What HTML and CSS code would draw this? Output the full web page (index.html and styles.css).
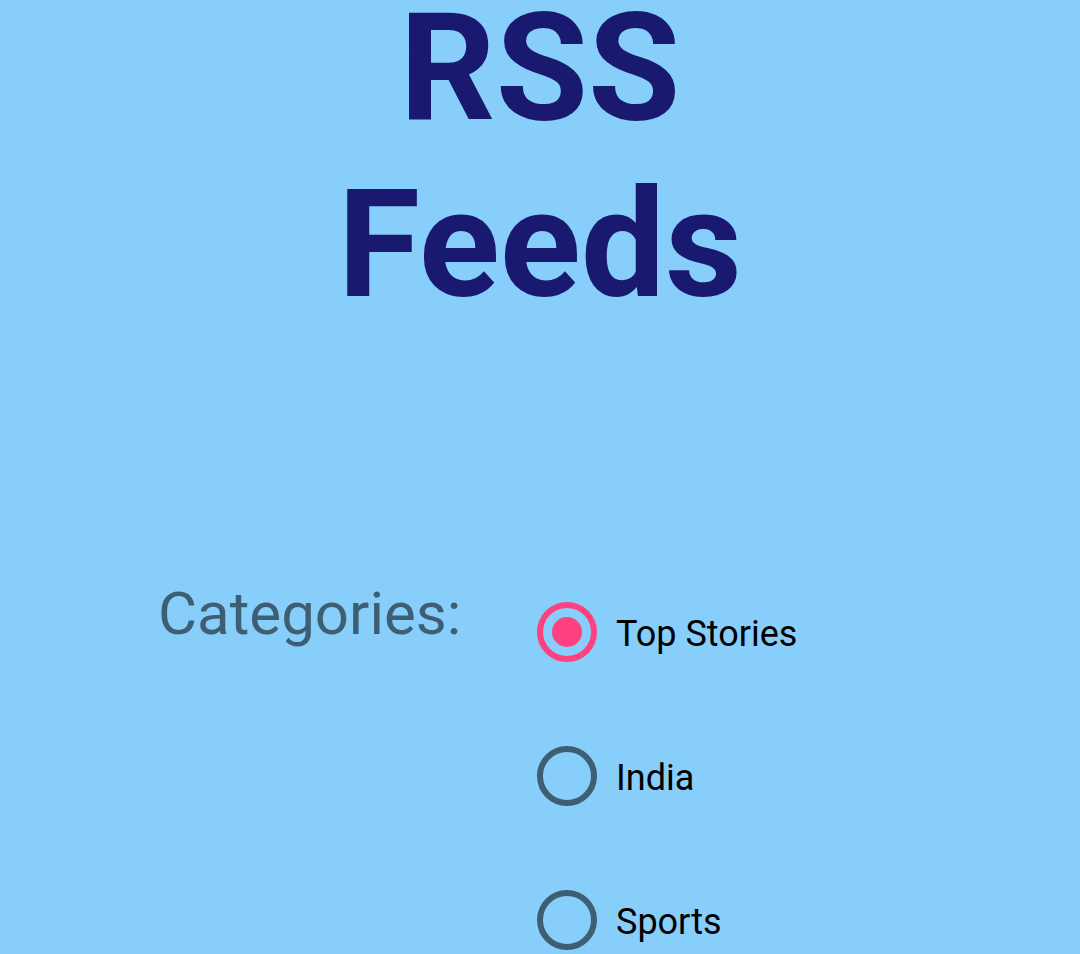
FILE: index.html
```html
<!DOCTYPE html>
<html lang="en">
<head>
<meta charset="utf-8">
<title>RSS Feeds</title>
<link rel="stylesheet" href="styles.css">
</head>
<body>
  <h1 class="title">RSS<br>Feeds</h1>
  <div class="categories">
    <div class="categories-label">Categories:</div>
    <div class="radio-group">
      <label class="radio-item">
        <span class="radio-circle checked"><span class="radio-dot"></span></span>
        <span class="radio-text">Top Stories</span>
      </label>
      <label class="radio-item">
        <span class="radio-circle"></span>
        <span class="radio-text">India</span>
      </label>
      <label class="radio-item">
        <span class="radio-circle"></span>
        <span class="radio-text">Sports</span>
      </label>
    </div>
  </div>
</body>
</html>
```

FILE: styles.css
```css
html {
  background: #87cefa;
}

body {
  margin: 0;
  background: #87cefa;
  font-family: Roboto, "Liberation Sans", sans-serif;
  overflow: hidden;
}

.title {
  margin: -18px 0 0;
  font-size: 150px;
  font-weight: 700;
  line-height: 1.172;
  text-align: center;
  color: #191970;
}

.categories {
  display: flex;
  align-items: flex-start;
  margin-top: 226px;
  padding-left: 158px;
}

.categories-label {
  flex: 0 0 379px;
  padding-top: 19px;
  font-size: 60px;
  line-height: 1.172;
  color: rgba(0, 0, 0, 0.54);
}

.radio-group {
  display: flex;
  flex-direction: column;
}

.radio-item {
  display: flex;
  align-items: center;
  gap: 19px;
  height: 144px;
}

.radio-circle {
  box-sizing: border-box;
  width: 60px;
  height: 60px;
  border: 6px solid rgba(0, 0, 0, 0.54);
  border-radius: 50%;
  display: flex;
  align-items: center;
  justify-content: center;
  flex: 0 0 60px;
}

.radio-circle.checked {
  border-color: #ff4081;
}

.radio-dot {
  width: 30px;
  height: 30px;
  border-radius: 50%;
  background: #ff4081;
}

.radio-text {
  margin-top: 5px;
  font-size: 36px;
  line-height: 1.172;
  color: #000;
}
```
